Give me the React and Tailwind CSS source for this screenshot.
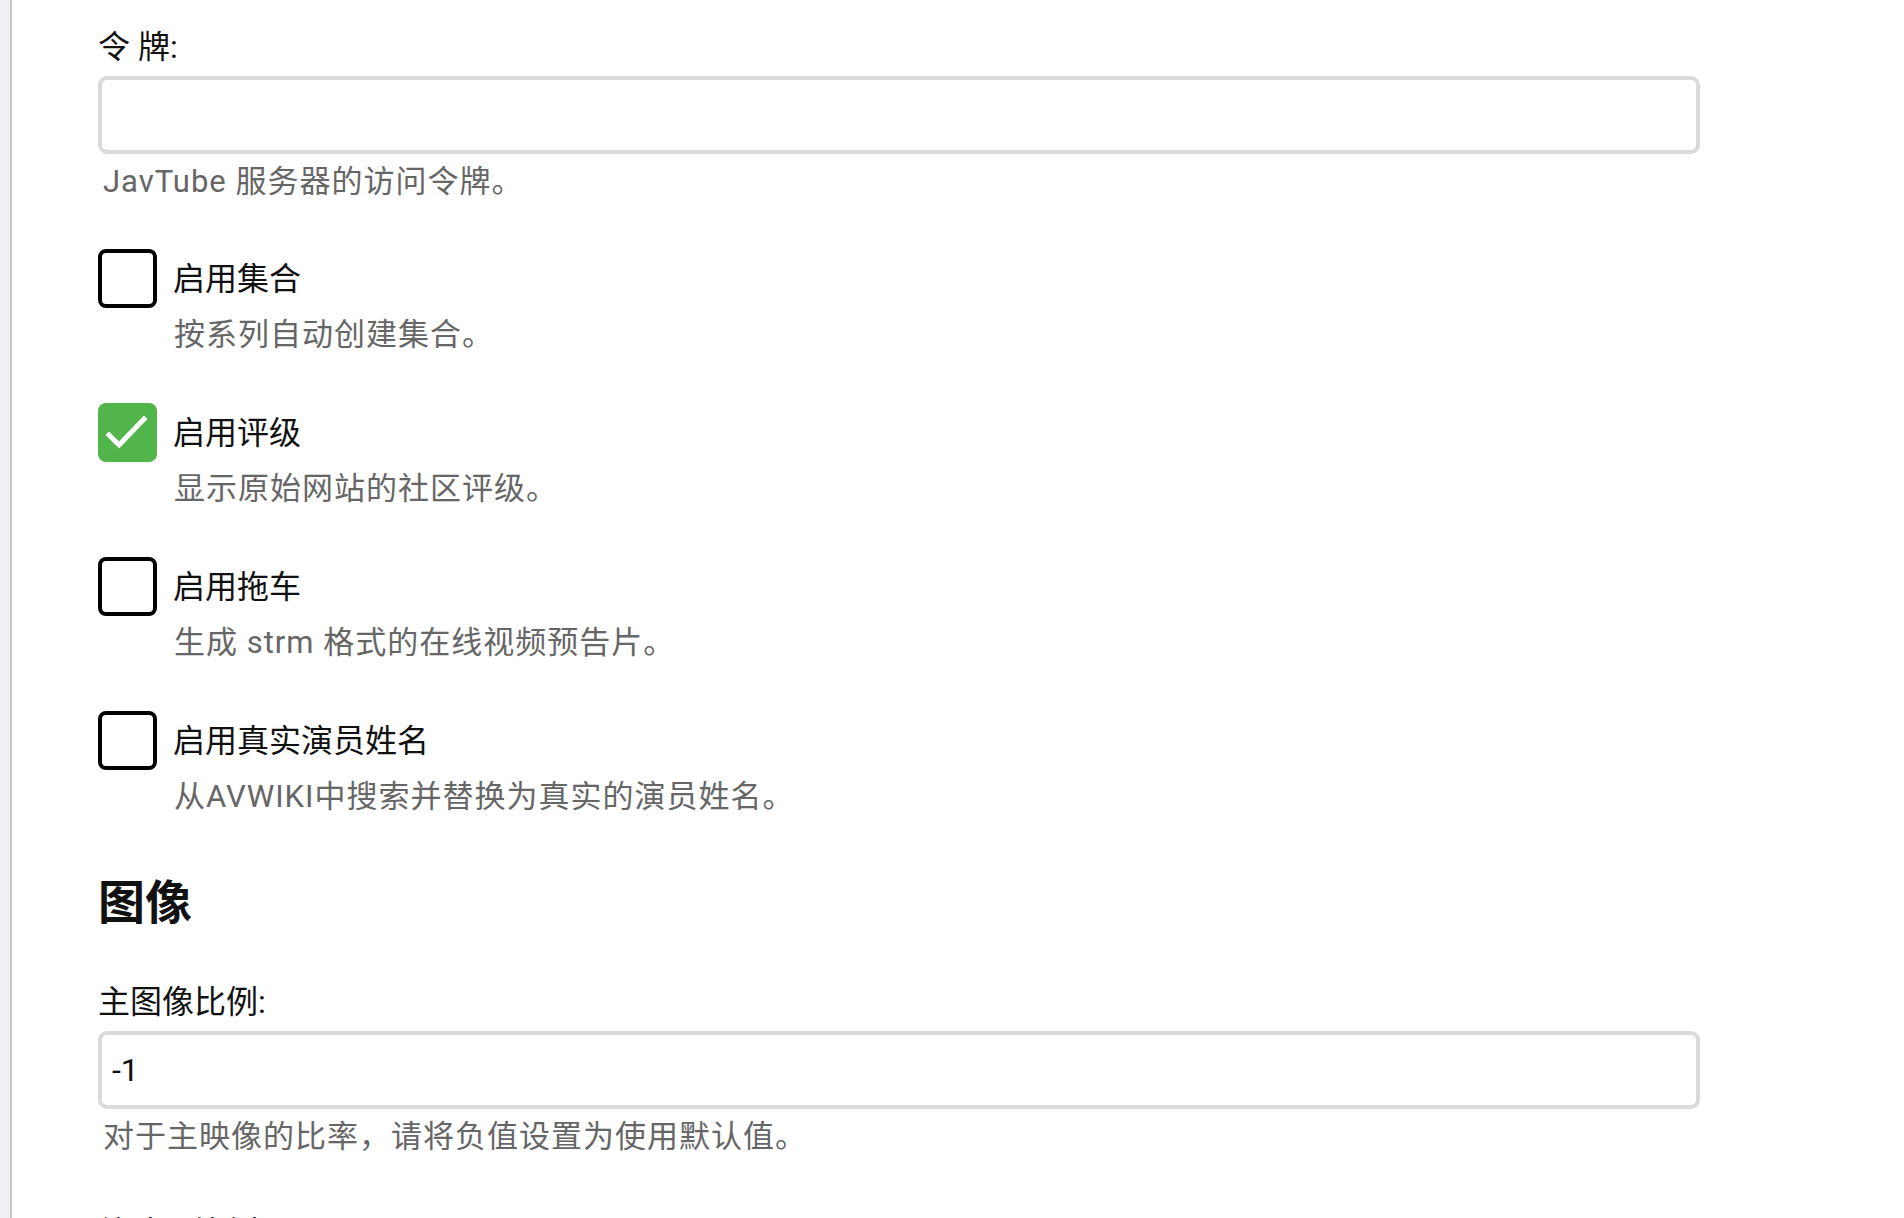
import React from "react";

const font = "font-['Roboto','Noto_Sans_CJK_SC',sans-serif]";

function TextField({ label, value, help, className = "" }) {
  return (
    <div className={className}>
      <label className="block text-[32px] leading-[40px] text-[#111]">{label}</label>
      <div className="mt-[9px] w-[1602px] h-[78px] border-4 border-[#dadada] rounded-[9px] flex items-center px-[10px] text-[32px] text-[#111]">
        {value}
      </div>
      <div className="mt-[8px] pl-[5px] text-[31px] leading-[40px] tracking-[1px] text-[#666]">{help}</div>
    </div>
  );
}

function CheckRow({ label, help, checked, className = "" }) {
  return (
    <div className={className}>
      <div className="flex items-center h-[59px]">
        {checked ? (
          <div className="w-[59px] h-[59px] rounded-[8px] bg-[#52b54b] shrink-0">
            <svg viewBox="0 0 59 59" className="w-[59px] h-[59px]">
              <path d="M11 32 L21 42 L46 16" fill="none" stroke="white" strokeWidth="5" strokeLinecap="square" />
            </svg>
          </div>
        ) : (
          <div className="w-[59px] h-[59px] rounded-[8px] border-4 border-black bg-white shrink-0" />
        )}
        <span className="ml-[16px] text-[32px] leading-[40px] text-[#111]">{label}</span>
      </div>
      <div className="ml-[76px] mt-[7px] text-[31px] leading-[40px] tracking-[1px] text-[#666]">{help}</div>
    </div>
  );
}

export default function App() {
  return (
    <div className={`h-screen overflow-hidden flex bg-white ${font}`}>
      <div className="w-[12px] shrink-0 bg-[#f1f1f5] border-r-2 border-[#c6c6cc]" />
      <div className="pl-[86px] pt-[27px]">
        <TextField label="令 牌:" value="" help="JavTube 服务器的访问令牌。" />

        <CheckRow className="mt-[47px]" label="启用集合" help="按系列自动创建集合。" />
        <CheckRow className="mt-[48px]" label="启用评级" help="显示原始网站的社区评级。" checked />
        <CheckRow className="mt-[48px]" label="启用拖车" help="生成 strm 格式的在线视频预告片。" />
        <CheckRow className="mt-[48px]" label="启用真实演员姓名" help="从AVWIKI中搜索并替换为真实的演员姓名。" />

        <h2 className="mt-[56px] text-[47px] leading-[60px] font-bold text-[#111]">图像</h2>

        <TextField
          className="mt-[49px]"
          label="主图像比例:"
          value="-1"
          help="对于主映像的比率，请将负值设置为使用默认值。"
        />

        <div className="mt-[56px] text-[32px] leading-[40px] text-[#111]">缩略图比例:</div>
      </div>
    </div>
  );
}
